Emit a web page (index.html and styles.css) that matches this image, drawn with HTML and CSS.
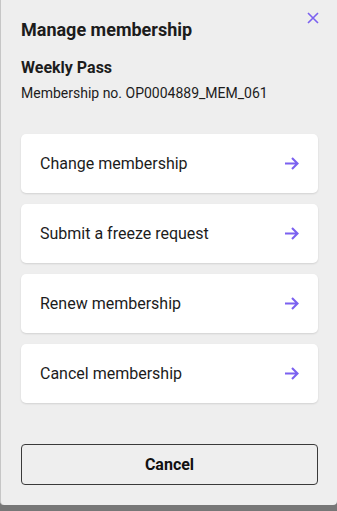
FILE: index.html
```html
<!DOCTYPE html>
<html lang="en">
<head>
<meta charset="utf-8">
<title>Manage membership</title>
<link rel="stylesheet" href="styles.css">
</head>
<body>
<div class="sheet">
  <button class="close" aria-label="Close">
    <svg width="12" height="12" viewBox="0 0 12 12"><path d="M1 1L11 11M11 1L1 11" stroke="#7b61f0" stroke-width="1.6" fill="none"/></svg>
  </button>
  <h1 class="title">Manage membership</h1>
  <h2 class="plan">Weekly Pass</h2>
  <p class="number">Membership no. OP0004889_MEM_061</p>
  <div class="actions">
    <a class="card" href="#"><span>Change membership</span><svg class="arrow" width="15" height="13" viewBox="0 0 15 13"><path d="M1 6.5H13.5M8 1L13.5 6.5L8 12" stroke="#7b61f0" stroke-width="2.1" fill="none"/></svg></a>
    <a class="card" href="#"><span>Submit a freeze request</span><svg class="arrow" width="15" height="13" viewBox="0 0 15 13"><path d="M1 6.5H13.5M8 1L13.5 6.5L8 12" stroke="#7b61f0" stroke-width="2.1" fill="none"/></svg></a>
    <a class="card" href="#"><span>Renew membership</span><svg class="arrow" width="15" height="13" viewBox="0 0 15 13"><path d="M1 6.5H13.5M8 1L13.5 6.5L8 12" stroke="#7b61f0" stroke-width="2.1" fill="none"/></svg></a>
    <a class="card" href="#"><span>Cancel membership</span><svg class="arrow" width="15" height="13" viewBox="0 0 15 13"><path d="M1 6.5H13.5M8 1L13.5 6.5L8 12" stroke="#7b61f0" stroke-width="2.1" fill="none"/></svg></a>
  </div>
  <button class="cancel">Cancel</button>
</div>
</body>
</html>
```
FILE: styles.css
```css
html, body {
  margin: 0;
  padding: 0;
  background: #777777;
  height: 511px;
  overflow: hidden;
}
body {
  font-family: Roboto, "Liberation Sans", sans-serif;
  color: #1c1c1c;
}
.sheet {
  position: relative;
  box-sizing: border-box;
  width: 337px;
  height: 505px;
  background: #eeeeee;
  border-left: 1px solid #c6c6c6;
  border-radius: 0 0 4px 4px;
  padding: 18px 19px 0 20px;
}
.close {
  position: absolute;
  top: 12px;
  right: 18px;
  border: 0;
  background: none;
  padding: 0;
  width: 12px;
  height: 12px;
  display: flex;
}
.title {
  margin: 0;
  font-size: 18px;
  font-weight: 700;
  line-height: 24px;
}
.plan {
  margin: 16px 0 0;
  font-size: 16px;
  font-weight: 700;
  line-height: 20px;
}
.number {
  margin: 5px 0 0;
  font-size: 14px;
  line-height: 20px;
}
.actions {
  margin-top: 31px;
  display: flex;
  flex-direction: column;
  gap: 11px;
}
.card {
  display: flex;
  align-items: center;
  justify-content: space-between;
  height: 59px;
  padding: 0 19px 0 19px;
  background: #ffffff;
  border-radius: 5px;
  box-shadow: 0 1px 2px rgba(0,0,0,0.12);
  text-decoration: none;
  color: #1c1c1c;
  font-size: 16px;
}
.cancel {
  display: block;
  width: 100%;
  margin-top: 41px;
  height: 41px;
  background: transparent;
  border: 1px solid #3a3a3a;
  border-radius: 4px;
  font-family: Roboto, "Liberation Sans", sans-serif;
  font-size: 16px;
  font-weight: 700;
  color: #111;
}
```
